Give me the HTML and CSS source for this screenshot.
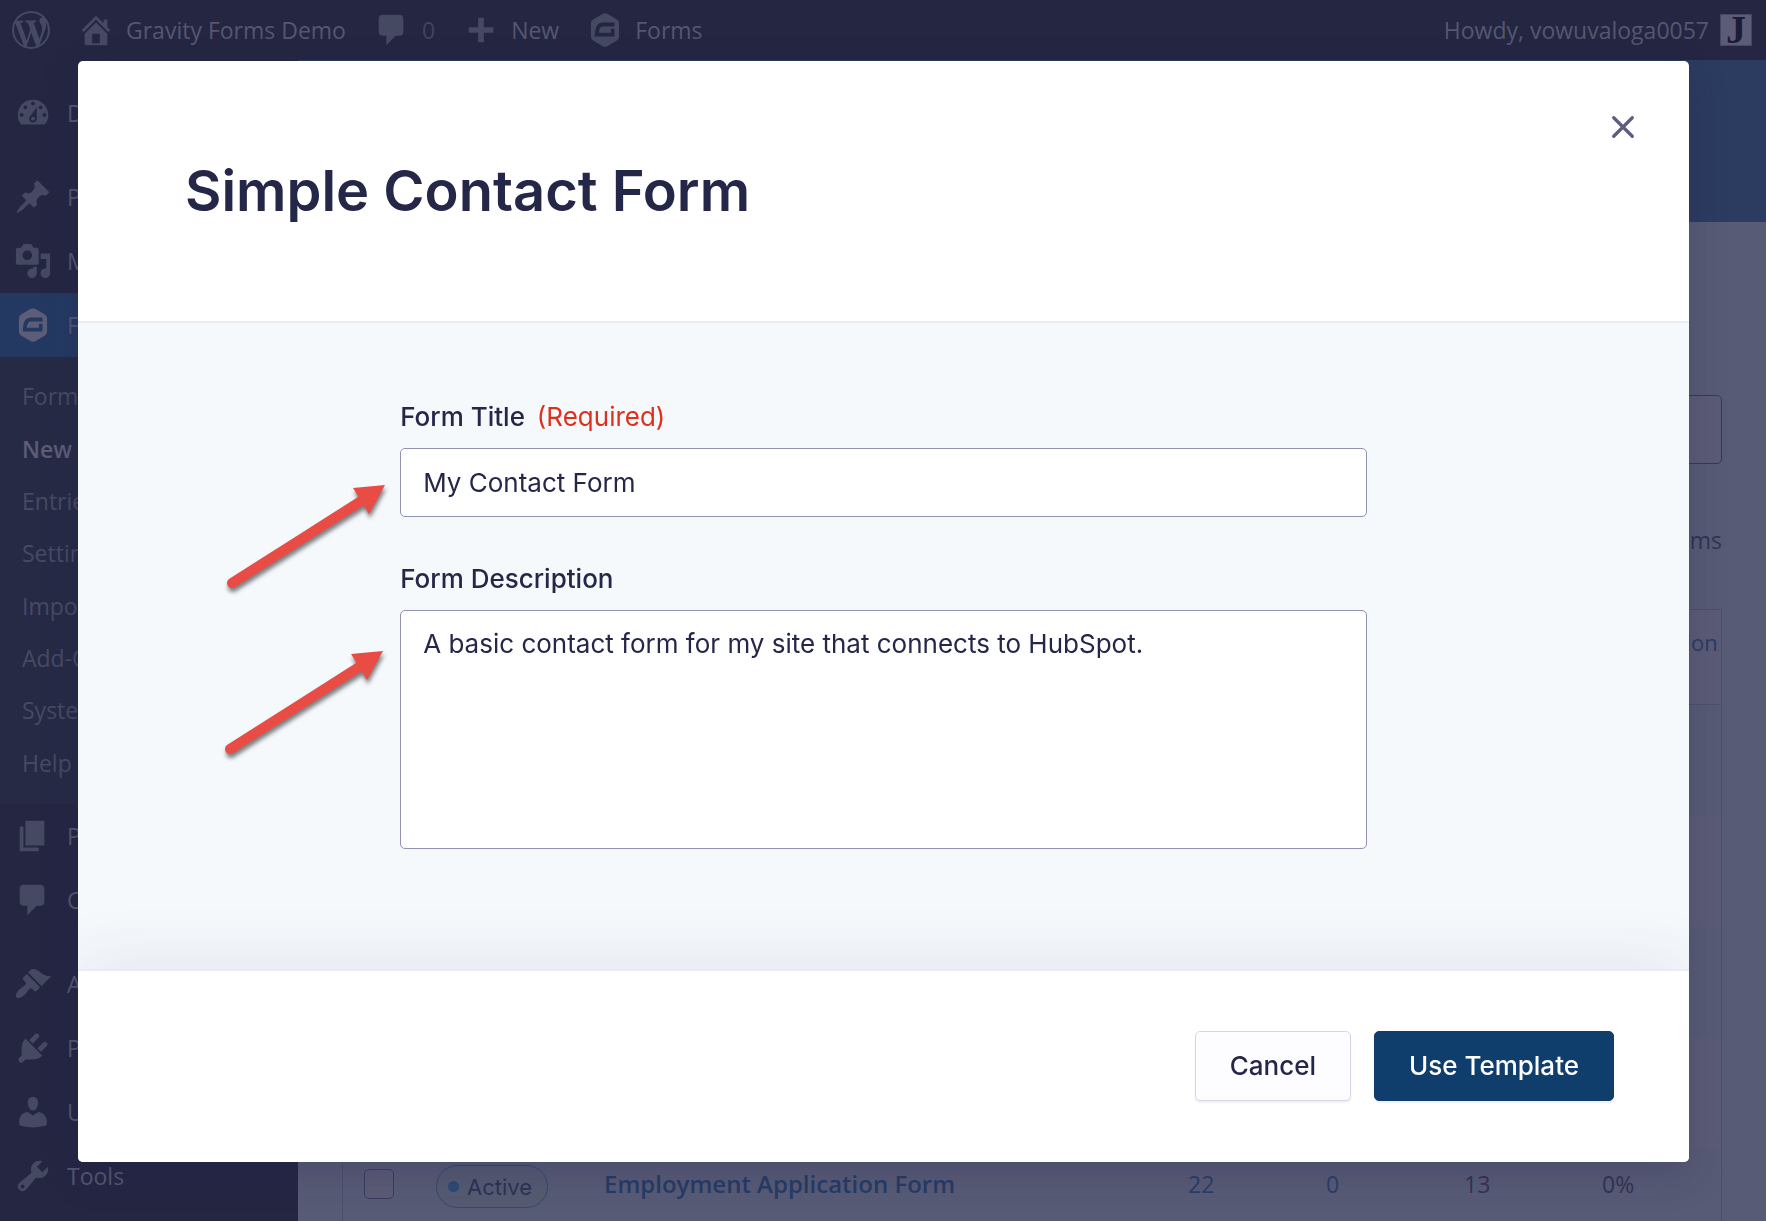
FILE: index.html
```
<!DOCTYPE html>
<html lang="en">
<head>
<meta charset="utf-8">
<title>Forms - Gravity Forms Demo</title>
<link rel="stylesheet" href="styles.css">
</head>
<body>

<svg class="sprite" aria-hidden="true">
	<symbol id="gravity" viewBox="0 0 20 20"><path fill-rule="evenodd" d="M8.9 1.5q1.1-.6 2.2 0l5 2.9q1.3.8 1.3 2.1v7q0 1.3-1.3 2.1l-5 2.9q-1.1.6-2.2 0l-5-2.9q-1.3-.8-1.3-2.1v-7q0-1.3 1.3-2.1zM15 6.1H8.900q-1.700 0-2.800 1.200-1.400 1.500-1.500 6.100H15V9.400h-1.900v2.100H6.800q.1-2 .8-2.800.5-.6 1.400-.6H15z"/></symbol>
	<symbol id="comment" viewBox="0 0 20 20"><path d="M5 2h9c1.100 0 2 .9 2 2v7c0 1.100-.9 2-2 2h-2l-5 5v-5H5c-1.100 0-2-.9-2-2V4c0-1.100.9-2 2-2z"/></symbol>
</svg>

<header class="adminbar">
	<a href="#" aria-label="About WordPress"><svg class="icon" viewBox="0 0 20 20"><path d="M20 10c0-5.510-4.490-10-10-10C4.480 0 0 4.490 0 10c0 5.520 4.480 10 10 10 5.510 0 10-4.480 10-10zM7.780 15.370L4.370 6.220c.55-.02 1.170-.08 1.170-.08.5-.06.44-1.130-.06-1.110 0 0-1.450.11-2.370.11-.18 0-.37 0-.58-.01C4.120 2.690 6.870 1.110 10 1.110c2.330 0 4.450.87 6.050 2.340-.68-.11-1.650.39-1.650 1.580 0 .74.45 1.360.9 2.100.35.61.55 1.360.55 2.460 0 1.490-1.400 5-1.400 5l-3.030-8.370c.54-.02.82-.17.82-.17.5-.05.44-1.250-.06-1.220 0 0-1.440.12-2.380.12-.87 0-2.330-.12-2.330-.12-.5-.03-.56 1.200-.06 1.220l.92.08 1.260 3.410zM17.410 10c.24-.64.74-1.870.43-4.250.7 1.290 1.050 2.710 1.050 4.250 0 3.290-1.730 6.240-4.400 7.780.97-2.590 1.940-5.200 2.920-7.780zM6.100 18.090C3.120 16.650 1.110 13.530 1.110 10c0-1.300.23-2.480.72-3.590C3.250 10.300 4.670 14.200 6.100 18.090zm4.030-6.630l2.580 6.980c-.86.29-1.760.45-2.710.45-.79 0-1.570-.11-2.290-.33.81-2.380 1.620-4.740 2.420-7.100z"/></svg></a>
	<a href="#"><svg class="icon" viewBox="0 0 20 20"><path d="M16 8.500l1.530 1.530-1.060 1.060L10 4.600l-6.470 6.490-1.060-1.060L10 2.500l4 4v-2h2v4zm-6-2.460l6 5.990V18H4v-5.970zM12 17v-5H8v5h4z"/></svg>Gravity Forms Demo</a>
	<a href="#" class="count"><svg class="icon"><use href="#comment"/></svg>0</a>
	<a href="#"><svg class="icon" viewBox="0 0 20 20"><path d="M8.500 3.500h3v5h5v3h-5v5h-3v-5h-5v-3h5z"/></svg>New</a>
	<a href="#"><svg class="icon"><use href="#gravity"/></svg>Forms</a>
	<a href="#" class="account">Howdy, vowuvaloga0057<span class="avatar">J</span></a>
</header>

<div class="page">
	<nav class="menu">
		<a href="#"><svg class="icon" viewBox="0 0 20 20"><path d="M3.760 16h12.480A7.998 7.998 0 0 0 10 3a7.998 7.998 0 0 0-6.240 13zM10 4c.55 0 1 .45 1 1s-.45 1-1 1-1-.45-1-1 .45-1 1-1zM6 6c.55 0 1 .45 1 1s-.45 1-1 1-1-.45-1-1 .45-1 1-1zm8 0c.55 0 1 .45 1 1s-.45 1-1 1-1-.45-1-1 .45-1 1-1zm-5.370 5.550L12 7v6c0 1.100-.9 2-2 2s-2-.9-2-2c0-.57.24-1.080.63-1.450zM4 10c.55 0 1 .45 1 1s-.45 1-1 1-1-.45-1-1 .45-1 1-1zm12 0c.55 0 1 .45 1 1s-.45 1-1 1-1-.45-1-1 .45-1 1-1zm-5 3c0-.55-.45-1-1-1s-1 .45-1 1 .45 1 1 1 1-.45 1-1z"/></svg>Dashboard</a>
		<a href="#" class="section"><svg class="icon" viewBox="0 0 20 20"><path d="M10.440 3.020l1.820-1.820 6.360 6.350-1.830 1.820c-1.050-.68-2.480-.57-3.410.36l-.75.75c-.92.93-1.040 2.350-.35 3.410l-1.830 1.820-2.410-2.410-2.800 2.790c-.42.42-3.380 2.710-3.800 2.290s1.860-3.390 2.280-3.810l2.790-2.790L4.100 9.360l1.830-1.820c1.050.69 2.480.57 3.400-.36l.75-.75c.93-.92 1.050-2.350.36-3.410z"/></svg>Posts</a>
		<a href="#"><svg class="icon" viewBox="0 0 20 20"><path d="M13 11V4c0-.55-.45-1-1-1h-1.670L9 1H5L3.670 3H2c-.55 0-1 .45-1 1v7c0 .55.45 1 1 1h10c.55 0 1-.45 1-1zM7 4.500c1.380 0 2.500 1.120 2.500 2.500S8.380 9.500 7 9.500 4.500 8.380 4.500 7 5.620 4.500 7 4.500zM14 6h5v10.500c0 1.380-1.120 2.500-2.500 2.500S14 17.880 14 16.500s1.120-2.500 2.500-2.500c.17 0 .34.02.5.05V9h-3V6zm-4 8.050V13h2v3.500c0 1.380-1.120 2.500-2.500 2.500S7 17.880 7 16.500 8.120 14 9.500 14c.17 0 .34.02.5.05z"/></svg>Media</a>
		<a href="#" class="current"><svg class="icon"><use href="#gravity"/></svg>Forms</a>
		<div class="submenu">
			<a href="#">Forms</a>
			<a href="#" class="active">New Form</a>
			<a href="#">Entries</a>
			<a href="#">Settings</a>
			<a href="#">Import/Export</a>
			<a href="#">Add-Ons</a>
			<a href="#">System Status</a>
			<a href="#">Help</a>
		</div>
		<a href="#"><svg class="icon" viewBox="0 0 20 20"><path d="M6 15V2h10v13H6zm-1 1h8v2H3V5h2v11z"/></svg>Pages</a>
		<a href="#"><svg class="icon"><use href="#comment"/></svg>Comments</a>
		<a href="#" class="section"><svg class="icon" viewBox="0 0 20 20"><path d="M14.480 11.060L7.410 3.990l1.500-1.500c.5-.56 2.300-.47 3.510.32 1.210.8 1.430 1.280 2.910 2.100 1.180.64 2.450 1.260 4.450.85zm-.71.71L6.700 4.700 4.930 6.470c-.39.39-.39 1.020 0 1.410l1.060 1.060c.39.39.39 1.030 0 1.420-.6.6-1.430 1.110-2.210 1.690-.35.26-.7.53-1.010.84C1.430 14.230.4 16.080 1.400 17.070c.99 1 2.840-.03 4.180-1.360.31-.31.58-.66.85-1.020.57-.78 1.080-1.610 1.690-2.210.39-.39 1.020-.39 1.410 0l1.060 1.060c.39.39 1.020.39 1.410 0z"/></svg>Appearance</a>
		<a href="#"><svg class="icon" viewBox="0 0 20 20"><path d="M13.110 4.360L9.870 7.600 8 5.730l3.240-3.240c.35-.34 1.050-.2 1.560.32.52.51.66 1.210.31 1.550zm-8 1.770l.91-1.120 9.010 9.010-1.190.84c-.71.71-2.630 1.160-3.820 1.160H6.140L4.900 17.260c-.59.59-1.540.59-2.120 0-.59-.58-.59-1.530 0-2.120l1.240-1.240v-3.880c0-1.130.4-3.190 1.090-3.890zm7.260 3.970l3.240-3.240c.34-.35 1.040-.21 1.550.31.52.51.66 1.210.31 1.550l-3.240 3.250z"/></svg>Plugins</a>
		<a href="#"><svg class="icon" viewBox="0 0 20 20"><path d="M10 9.250c-2.270 0-2.730-3.440-2.730-3.440C7 4.020 7.820 2 9.970 2c2.160 0 2.980 2.020 2.710 3.810 0 0-.41 3.440-2.680 3.440zm0 2.570L12.720 10c2.390 0 4.520 2.330 4.520 4.530v2.490s-3.650 1.130-7.240 1.130c-3.650 0-7.240-1.130-7.240-1.130v-2.490c0-2.250 1.940-4.480 4.470-4.480z"/></svg>Users</a>
		<a href="#"><svg class="icon" viewBox="0 0 20 20"><path d="M16.680 9.770c-1.340 1.340-3.300 1.670-4.950.99l-5.410 6.520c-.99.99-2.590.99-3.580 0s-.99-2.590 0-3.570l6.520-5.420c-.68-1.650-.35-3.610.99-4.950 1.280-1.280 3.120-1.620 4.720-1.060l-2.890 2.890 2.820 2.820 2.860-2.870c.53 1.580.18 3.390-1.080 4.650zM3.810 16.210c.4.39 1.040.39 1.430 0 .4-.4.4-1.040 0-1.430-.39-.4-1.030-.4-1.430 0-.39.39-.39 1.030 0 1.430z"/></svg>Tools</a>
	</nav>

	<main class="content">
		<div class="banner"></div>
		<div class="toolbar">
			<input type="search" class="search" aria-label="Search forms">
		</div>
		<div class="total">items</div>
		<table class="forms">
			<thead>
				<tr><th class="check"></th><th class="status"></th><th></th><th class="num"></th><th class="num"></th><th class="num"></th><th class="rate">Conversion</th></tr>
			</thead>
			<tbody>
				<tr><td colspan="7"></td></tr>
				<tr><td colspan="7"></td></tr>
				<tr><td colspan="7"></td></tr>
				<tr><td colspan="7"></td></tr>
				<tr>
					<td><input type="checkbox" class="tick" aria-label="Select Employment Application Form"></td>
					<td><button type="button" class="pill">Active</button></td>
					<td><a href="#" class="name">Employment Application Form</a></td>
					<td><a href="#">22</a></td>
					<td><a href="#">0</a></td>
					<td>13</td>
					<td>0%</td>
				</tr>
			</tbody>
		</table>
	</main>
</div>

<form class="modal" role="dialog" aria-labelledby="modal-title">
	<div class="modal-header">
		<h1 id="modal-title">Simple Contact Form</h1>
		<button type="button" class="close" aria-label="Close"><svg viewBox="0 0 22 22"><path d="M2.500 2.500l17 17m0-17l-17 17"/></svg></button>
	</div>
	<div class="modal-body">
		<div class="field">
			<label for="form-title">Form Title <span class="required">(Required)</span></label>
			<input type="text" id="form-title" value="My Contact Form">
			<svg class="arrow" viewBox="0 0 170 120"><path d="M7 103L140 18.500"/><polygon points="160,5 128,8 144,34"/></svg>
		</div>
		<div class="field">
			<label for="form-desc">Form Description</label>
			<textarea id="form-desc">A basic contact form for my site that connects to HubSpot.</textarea>
			<svg class="arrow" viewBox="0 0 170 120"><path d="M5 107L138 22.500"/><polygon points="158,9 126,12 142,38"/></svg>
		</div>
	</div>
	<div class="modal-footer">
		<button type="button" class="btn">Cancel</button>
		<button type="button" class="btn primary">Use Template</button>
	</div>
</form>

</body>
</html>
```
FILE: styles.css
```
* {
	box-sizing: border-box;
}

body {
	margin: 0;
	height: 100vh;
	overflow: hidden;
	background: #585b75;
	color: #333253;
	font: 23px/32px "Open Sans", "Noto Sans", sans-serif;
}

a {
	color: inherit;
	text-decoration: none;
}

.sprite {
	display: none;
}

.icon {
	flex: none;
	width: 38px;
	height: 38px;
	fill: #464962;
}

/* admin bar */
.adminbar {
	display: flex;
	gap: 27px;
	height: 60px;
	padding: 0 14px 0 12px;
	background: #242642;
	color: #555771;
}

.adminbar a {
	display: flex;
	align-items: center;
	gap: 11px;
}

.adminbar .count {
	color: #42445f;
}

.adminbar .account {
	margin-left: auto;
}

.avatar {
	width: 32px;
	height: 32px;
	border: 1px solid #464760;
	background: #5c5c78;
	color: #1b1b38;
	font: bold 40px/30px "Liberation Serif", serif;
	text-align: center;
}

/* side menu */
.page {
	display: flex;
}

.menu {
	flex: none;
	width: 298px;
	min-height: calc(100vh - 60px);
	padding-top: 21px;
	background: #242642;
	color: #555771;
}

.menu > a {
	display: flex;
	align-items: center;
	gap: 15px;
	height: 64px;
	padding-left: 14px;
}

.menu .section {
	margin-top: 20px;
}

.menu .current {
	background: #243962;
}

.current .icon {
	fill: #5c5d78;
}

.submenu {
	display: grid;
	grid-auto-rows: 1fr;
	align-items: center;
	height: 447px;
	padding: 13px 22px 15px;
	background: #272a45;
	color: #464a65;
}

.submenu .active {
	color: #5c5d78;
	font-weight: 600;
}

/* forms list */
.content {
	flex: 1;
}

.banner {
	height: 162px;
	background: #2c3b60;
}

.toolbar {
	display: flex;
	justify-content: flex-end;
	padding: 173px 44px 0;
}

.search {
	width: 400px;
	height: 69px;
	border: 1px solid #2f3a62;
	border-radius: 5px;
	background: #5c5b76;
}

.total {
	padding: 60px 44px 53px;
	text-align: right;
}

.forms {
	width: calc(100% - 88px);
	margin: 0 44px;
	border: 1px solid #4c4f6d;
	border-spacing: 0;
	table-layout: fixed;
}

.forms th,
.forms td {
	padding: 16px 0;
	text-align: left;
	vertical-align: top;
}

.forms th {
	height: 95px;
	border-bottom: 1px solid #4c4f6d;
	background: #5c5b76;
	color: #263c66;
	font-size: 22px;
	font-weight: 400;
}

.forms td {
	height: 111px;
	line-height: 38px;
}

.forms td a {
	color: #2a3e68;
}

.forms tr:nth-child(even) td {
	background: #5c5b76;
}

.forms .check { width: 93px; }
.forms .status { width: 168px; }
.forms .num { width: 138px; }
.forms .rate { width: 119px; }

.forms .name {
	color: #263b65;
	font-size: 24px;
	font-weight: 600;
}

.tick {
	appearance: none;
	display: block;
	width: 30px;
	height: 30px;
	margin: 4px 21px;
	border: 1px solid #3a3d60;
	border-radius: 5px;
	background: #5c5b76;
}

.pill {
	display: flex;
	align-items: center;
	gap: 8px;
	height: 43px;
	padding: 0 15px 0 11px;
	border: 1px solid #334a6c;
	border-radius: 22px;
	background: #565b72;
	color: #2b3353;
	font: 22px/32px Inter, sans-serif;
}

.pill::before {
	content: "";
	width: 11px;
	height: 11px;
	border-radius: 50%;
	background: #2c4b73;
}

/* template dialog */
.modal {
	position: fixed;
	top: 61px;
	right: 77px;
	bottom: 59px;
	left: 78px;
	display: flex;
	flex-direction: column;
	overflow: hidden;
	border-radius: 5px;
	background: #fff;
	box-shadow: 0 12px 36px rgba(36, 36, 84, 0.25);
	color: #242748;
	font: 26px/34px Inter, sans-serif;
}

.modal-header {
	display: flex;
	justify-content: space-between;
	align-items: flex-start;
	height: 262px;
	padding: 54px 54px 0 107px;
	border-bottom: 2px solid #ebebf7;
}

.modal-header h1 {
	margin: 42px 0 0;
	font-size: 56px;
	font-weight: 600;
	line-height: 68px;
}

.close {
	padding: 0;
	border: 0;
	background: none;
}

.close svg {
	display: block;
	width: 24px;
	height: 24px;
	fill: none;
	stroke: #5b5e80;
	stroke-width: 3;
	stroke-linecap: round;
}

.modal-body {
	flex: 1;
	padding: 77px 20% 0;
	background: #f5f9fc;
}

.field {
	position: relative;
	display: flex;
	flex-direction: column;
	gap: 14px;
	margin-bottom: 45px;
}

.field label {
	font-weight: 500;
}

.required {
	margin-left: 5px;
	color: #dd301d;
	font-weight: 400;
}

.field input,
.field textarea {
	width: 100%;
	height: 69px;
	padding: 16px 22px;
	border: 1px solid #9092b2;
	border-radius: 5px;
	background: #fff;
	color: inherit;
	font: inherit;
	resize: none;
}

.field textarea {
	height: 239px;
}

/* pointer drawn beside a field */
.arrow {
	position: absolute;
	top: 80px;
	right: 100%;
	width: 170px;
	height: 120px;
	margin-right: 5px;
	filter: drop-shadow(1px 4px 2px rgba(0, 0, 0, 0.5));
}

.arrow path {
	stroke: #e94b45;
	stroke-width: 10;
	stroke-linecap: round;
}

.arrow polygon {
	fill: #e94b45;
}

.modal-footer {
	display: flex;
	justify-content: flex-end;
	align-items: flex-start;
	gap: 23px;
	height: 193px;
	padding: 60px 75px 0;
	border-top: 2px solid #ebebf7;
	background: #fff;
	box-shadow: 0 -4px 60px rgba(58, 54, 110, 0.1);
}

.btn {
	height: 70px;
	padding: 0 34px;
	border: 1px solid #d5d7e9;
	border-radius: 5px;
	background: #fdfdff;
	box-shadow: 0 2px 2px rgba(58, 54, 110, 0.07);
	color: #242748;
	font: 500 26px/34px Inter, sans-serif;
}

.primary {
	border-color: #0f3d6c;
	background: #0f3d6c;
	color: #fff;
}
```
